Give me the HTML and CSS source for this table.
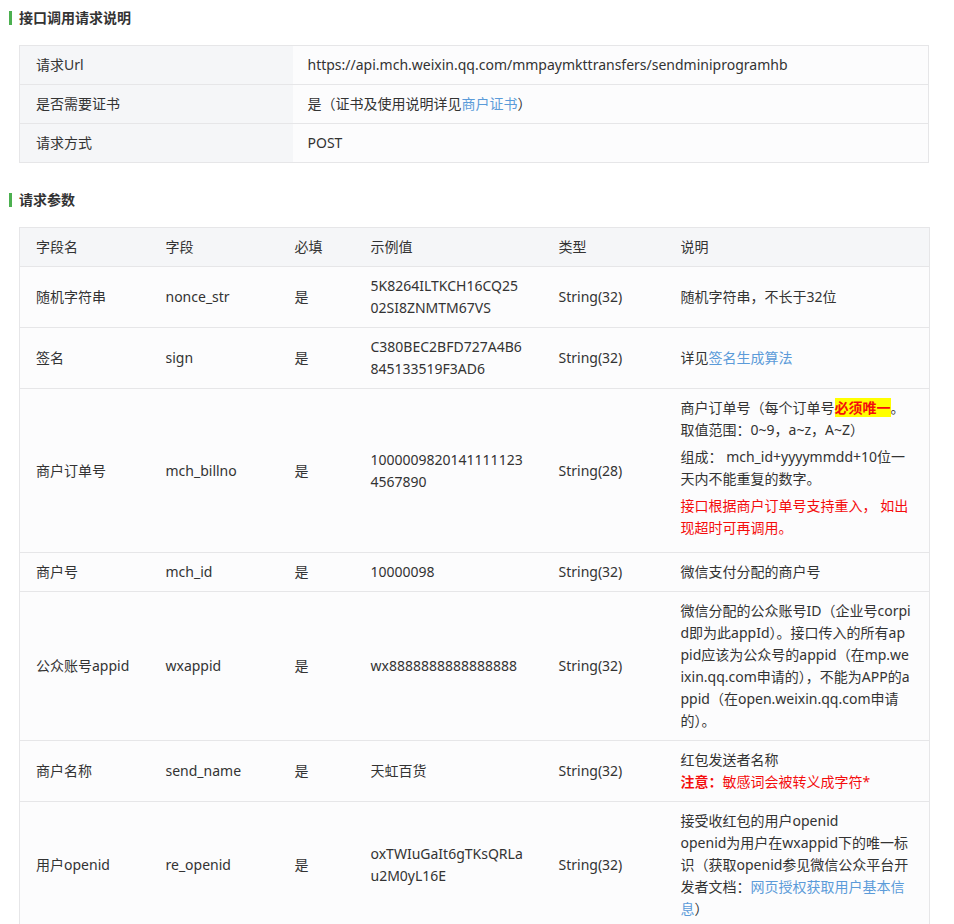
FILE: index.html
```html
<!DOCTYPE html>
<html lang="zh-CN">
<head>
<meta charset="utf-8">
<title>接口调用请求说明</title>
<link rel="stylesheet" href="styles.css">
</head>
<body>
<div class="doc">
  <h3 class="sec-title">接口调用请求说明</h3>
  <table class="info">
    <colgroup><col class="info-k"><col></colgroup>
    <tr><th>请求Url</th><td>https://api.mch.weixin.qq.com/mmpaymkttransfers/sendminiprogramhb</td></tr>
    <tr><th>是否需要证书</th><td>是（证书及使用说明详见<a class="link">商户证书</a>）</td></tr>
    <tr><th>请求方式</th><td>POST</td></tr>
  </table>

  <h3 class="sec-title sec-2">请求参数</h3>
  <table class="params">
    <colgroup>
      <col class="c1"><col class="c2"><col class="c3"><col class="c4"><col class="c5"><col class="c6">
    </colgroup>
    <thead>
      <tr><th>字段名</th><th>字段</th><th>必填</th><th>示例值</th><th>类型</th><th>说明</th></tr>
    </thead>
    <tbody>
      <tr><td>随机字符串</td><td>nonce_str</td><td>是</td><td class="ex">5K8264ILTKCH16CQ2502SI8ZNMTM67VS</td><td>String(32)</td><td class="desc">随机字符串，不长于32位</td></tr>
      <tr><td>签名</td><td>sign</td><td>是</td><td class="ex">C380BEC2BFD727A4B6845133519F3AD6</td><td>String(32)</td><td class="desc">详见<a class="link">签名生成算法</a></td></tr>
      <tr><td>商户订单号</td><td>mch_billno</td><td>是</td><td class="ex">10000098201411111234567890</td><td>String(28)</td>
        <td class="desc">
          <p>商户订单号（每个订单号<span class="mark">必须唯一</span>。取值范围：0~9，a~z，A~Z）</p>
          <p>组成： mch_id+yyyymmdd+10位一天内不能重复的数字。</p>
          <p class="warn">接口根据商户订单号支持重入， 如出现超时可再调用。</p>
        </td></tr>
      <tr><td>商户号</td><td>mch_id</td><td>是</td><td class="ex">10000098</td><td>String(32)</td><td class="desc">微信支付分配的商户号</td></tr>
      <tr><td>公众账号appid</td><td>wxappid</td><td>是</td><td class="ex">wx8888888888888888</td><td>String(32)</td><td class="desc">微信分配的公众账号ID（企业号corpid即为此appId）。接口传入的所有appid应该为公众号的appid（在mp.weixin.qq.com申请的），不能为APP的appid（在open.weixin.qq.com申请的）。</td></tr>
      <tr><td>商户名称</td><td>send_name</td><td>是</td><td class="ex">天虹百货</td><td>String(32)</td><td class="desc">红包发送者名称<br><span class="warn"><b>注意：</b>敏感词会被转义成字符*</span></td></tr>
      <tr><td>用户openid</td><td>re_openid</td><td>是</td><td class="ex">oxTWIuGaIt6gTKsQRLau2M0yL16E</td><td>String(32)</td><td class="desc">接受收红包的用户openid<br>openid为用户在wxappid下的唯一标识（获取openid参见微信公众平台开发者文档：<a class="link">网页授权获取用户基本信息</a>）</td></tr>
    </tbody>
  </table>
</div>
</body>
</html>
```

FILE: styles.css
```css
html, body {
  margin: 0;
  padding: 0;
  background: #ffffff;
}
body {
  font-family: "Noto Sans", "Noto Sans CJK SC", sans-serif;
  font-size: 14px;
  color: #333333;
}
.doc {
  padding: 8px 25px 0 9px;
}
.sec-title {
  margin: 0;
  font-size: 14px;
  line-height: 20px;
  font-weight: bold;
  color: #333;
  display: flex;
  align-items: center;
  gap: 7px;
}
.sec-title::before {
  content: "";
  display: block;
  width: 3px;
  height: 14px;
  background: #4cb050;
}
.sec-2 {
  margin-top: 27px;
}
table {
  border-collapse: collapse;
  table-layout: fixed;
  width: 910px;
  margin-left: 10px;
  margin-top: 17px;
  background: #fcfcfd;
  border: 1px solid #e6e6e8;
}
th, td {
  border: none;
  border-top: 1px solid #e6e6e8;
  text-align: left;
  font-weight: normal;
  padding: 8px 15px;
  line-height: 22px;
  vertical-align: middle;
  word-break: break-all;
}
.info th {
  background: #f5f6f8;
  padding-left: 16px;
}
.info-k { width: 273px; }
.params thead th {
  background: #f5f6f8;
}
.params tr > :first-child { padding-left: 16px; }
.c1 { width: 131px; }
.c2 { width: 129px; }
.c3 { width: 76px; }
.c4 { width: 188px; }
.c5 { width: 122px; }
.c6 { width: 264px; }
.params td.ex { padding-right: 18px; }
.params td.desc { padding-right: 18px; }
.params p {
  margin: 0 0 5px;
}
.link {
  color: #5b9bd9;
  text-decoration: none;
}
.warn {
  color: #f40d0d;
}
.warn b { font-weight: bold; }
.mark {
  color: #f40d0d;
  font-weight: bold;
  background: #ffff00;
}
```
